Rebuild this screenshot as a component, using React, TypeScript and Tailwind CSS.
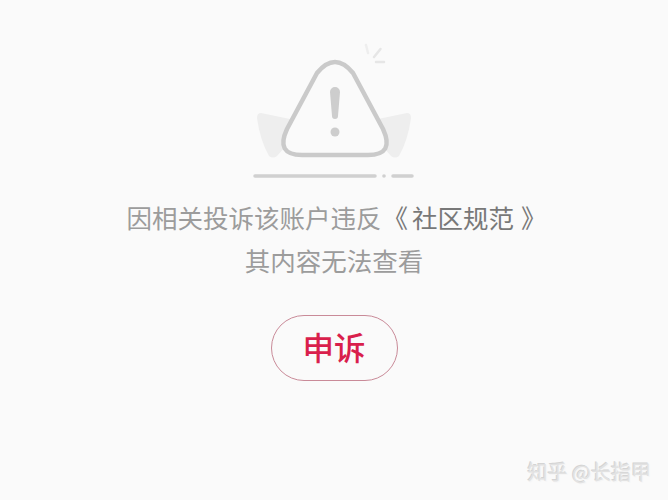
export default function App() {
  return (
    <div className="relative h-[500px] w-[668px] overflow-hidden bg-[#fafafa] font-['Noto_Sans_CJK_SC','Noto_Sans',sans-serif]">
      <div className="flex flex-col items-center pt-[40px]">
        {/* warning illustration */}
        <svg width="170" height="142" viewBox="0 0 170 142" className="ml-[2px]">
          <path d="M11 73 L40 79 L34 108 L27 116 Q23 119 19 116 Q10 100 7 78 Q7 73 11 73 Z" fill="#eeeeee" />
          <path d="M157 73 L128 79 L134 108 L141 116 Q145 119 149 116 Q158 100 161 78 Q161 73 157 73 Z" fill="#eeeeee" />
          <path
            d="M67 33 Q85 11 103 33 L133 89 Q145 115 118 115 L52 115 Q25 115 37 89 Z"
            fill="#fafafa"
            stroke="#cacaca"
            strokeWidth="4.5"
            strokeLinejoin="round"
          />
          <path d="M80 52 a5 5 0 0 1 10 0 L88 76 a3 3 0 0 1 -6 0 Z" fill="#cdcdcd" />
          <circle cx="85" cy="92" r="4.5" fill="#cdcdcd" />
          <path d="M116 5 L118 13" stroke="#eeeeee" strokeWidth="2.5" strokeLinecap="round" />
          <path d="M130.5 9 L124 17" stroke="#e6e6e6" strokeWidth="2.5" strokeLinecap="round" />
          <path d="M126 22 L134 22" stroke="#e6e6e6" strokeWidth="2.5" strokeLinecap="round" />
          <path d="M5 136 L125 136" stroke="#d0d0d0" strokeWidth="3.5" strokeLinecap="round" />
          <circle cx="134" cy="136" r="1.8" fill="#d0d0d0" />
          <path d="M143 136 L162 136" stroke="#d0d0d0" strokeWidth="3.5" strokeLinecap="round" />
        </svg>

        <p className="mt-[13px] flex whitespace-nowrap pl-[5px] text-[25.5px] leading-[43px] text-[#9c9c9c]">
          <span>因相关投诉该账户违反</span>
          <span className="ml-[1px] text-[#787878]">《</span>
          <span className="ml-[4px] text-[#787878]">社区规范</span>
          <span className="ml-[7px] text-[#787878]">》</span>
        </p>
        <p className="whitespace-nowrap text-[25.5px] leading-[43px] text-[#9c9c9c]">其内容无法查看</p>

        <button className="mt-[34px] flex h-[66px] w-[127px] items-center justify-center rounded-full border border-[#c98a98] pb-[2px] text-[31.5px] font-medium leading-none text-[#d91f4c]">
          申诉
        </button>
      </div>

      {/* watermark */}
      <div className="absolute right-[17px] top-[459px] whitespace-nowrap text-[20px] leading-[26px] text-[#e2e2e2] [text-shadow:1px_1px_0_#f6f6f6,-1px_-1px_0_#d4d4d4]">
        知乎 @长指甲
      </div>
    </div>
  );
}
